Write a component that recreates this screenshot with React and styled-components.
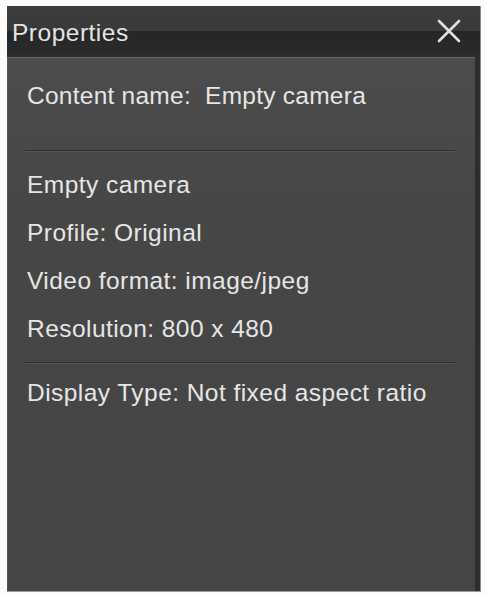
import * as React from 'react';
import styled, { createGlobalStyle } from 'styled-components';

const GlobalStyle = createGlobalStyle`
  html, body {
    margin: 0;
    background: #fbfbfb;
  }
`;

const Panel = styled.section`
  box-sizing: border-box;
  width: 474px;
  height: 586px;
  margin: 6px 0 0 7px;
  display: flex;
  flex-direction: column;
  background: #2d2d2d;
  border-right: 1px solid #8a8a8a;
  border-bottom: 1px solid #9a9a9a;
  font-family: "Liberation Sans", Arial, sans-serif;
  color: #e8e8e8;
`;

const TitleBar = styled.header`
  height: 49px;
  display: flex;
  align-items: center;
  justify-content: space-between;
  padding: 4px 18px 0 5px;
  box-sizing: border-box;
  background: linear-gradient(to bottom, #3d3d3d 0%, #393939 50%, #262626 52%, #2b2b2b 100%);
`;

const Title = styled.h1`
  margin: 0;
  font-size: 24.5px;
  font-weight: normal;
  letter-spacing: 0.5px;
  color: #e4e4e4;
`;

const CloseButton = styled.button`
  border: 0;
  background: none;
  padding: 0;
  margin-top: -4px;
  width: 26px;
  height: 26px;
  display: flex;
  align-items: center;
  justify-content: center;
  cursor: pointer;
`;

const Body = styled.div`
  flex: 1;
  margin: 2px 5px 0 0;
  border-top: 1px solid #686868;
  border-left: 1px solid #555;
  background: linear-gradient(to bottom, #4c4c4c 0%, #464646 30%, #454545 100%);
  padding: 23px 20px 0 19px;
`;

const Line = styled.p`
  margin: 0;
  height: 48px;
  line-height: 30px;
  font-size: 24.5px;
  letter-spacing: ${p => p.$spacing ?? 0.45}px;
  color: #e6e6e6;
  white-space: pre;
`;

const Divider = styled.hr`
  margin: ${p => p.top}px 0 ${p => p.bottom}px -2px;
  border: 0;
  border-top: 1px solid #2f2f2f;
  border-bottom: 1px solid #555;
`;

const info = [
  'Empty camera',
  'Profile: Original',
  'Video format: image/jpeg',
  'Resolution: 800 x 480',
];

export default function App() {
  return (
    <>
      <GlobalStyle />
      <Panel>
        <TitleBar>
          <Title>Properties</Title>
          <CloseButton aria-label="Close">
            <svg width="24" height="24" viewBox="0 0 24 24">
              <path d="M2 2 L22 22 M22 2 L2 22" stroke="#e0e0e0" strokeWidth="2.6" strokeLinecap="round" />
            </svg>
          </CloseButton>
        </TitleBar>
        <Body>
          <Line $spacing={0.25}>{'Content name:  Empty camera'}</Line>
          <Divider top={21} bottom={18} />
          {info.map(text => <Line key={text}>{text}</Line>)}
          <Divider top={0} bottom={14} />
          <Line>Display Type: Not fixed aspect ratio</Line>
        </Body>
      </Panel>
    </>
  );
}
